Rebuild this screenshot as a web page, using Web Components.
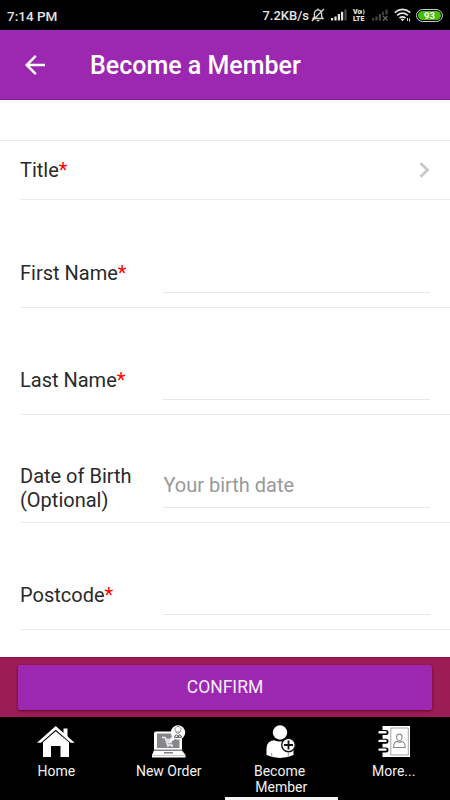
<!DOCTYPE html>
<html lang="en">
<head>
<meta charset="utf-8">
<meta name="viewport" content="width=device-width, initial-scale=1">
<title>Become a Member</title>
<style>
  html, body {
    margin: 0;
    height: 100%;
    overflow: hidden;
    background: #fff;
    font-family: Roboto, "Liberation Sans", sans-serif;
  }
</style>
</head>
<body>
<member-page></member-page>

<script>
class StatusBar extends HTMLElement{
  constructor(){
    super();
    this.attachShadow({mode: 'open'});
  }

  connectedCallback(){
    this.shadowRoot.innerHTML = `
    <style>
    :host {
      display: flex;
      justify-content: space-between;
      align-items: center;
      height: 30px;
      padding: 0 7px;
      background: #000;
      color: #e4e4e4;
      font-size: 13.5px;
      font-weight: 500;
      line-height: 30px;
    }
    .time { padding-top: 1px; }
    .right { display: flex; align-items: center; }
    .speed { font-size: 13px; padding-top: 1px; }
    svg { display: block; }
    .bell { margin-left: 2px; }
    .signal { margin-left: 6px; }
    .volte {
      margin-left: 6px;
      width: 14px;
      font-size: 7px;
      font-weight: 900;
      line-height: 8px;
    }
    .volte div { display: flex; align-items: center; height: 7px; }
    .nosim { margin-left: 5px; }
    .wifi { margin-left: 6px; }
    .battery {
      box-sizing: border-box;
      margin-left: 5px;
      width: 27px;
      height: 13px;
      border: 1px solid #ccc;
      border-radius: 6.5px;
      padding: 1px;
    }
    .level {
      height: 9px;
      border-radius: 4.5px;
      background: #47bd0e;
      color: #fff;
      font-size: 9.5px;
      font-weight: 700;
      line-height: 10px;
      text-align: center;
    }
    </style>
    <span class="time">7:14 PM</span>
    <div class="right">
      <span class="speed">7.2KB/s</span>
      <svg class="bell" width="14" height="14" viewBox="0 0 14 14" fill="none" stroke="#d8d8d8" stroke-width="1.3">
        <path d="M2 10.500h10L10.600 8.600V5.500a3.600 3.600 0 0 0-7.200 0v3.100zM7 2V.5M5.600 12.600h2.800M1 13L13 1"/>
      </svg>
      <svg class="signal" width="16" height="12" viewBox="0 0 16 12" fill="#e4e4e4">
        <path d="M0 9h2.200v2.500H0zM3.400 7.500h2.200v4H3.400zM6.800 5h2.200v6.500H6.800zM10 2.700h2.200v8.800H10z"/>
        <path fill="#4a4a4a" d="M13.400.5h2.200v11h-2.200z"/>
      </svg>
      <div class="volte">
        <div>Vo<svg width="4" height="6" viewBox="0 0 4 6" fill="none" stroke="#e4e4e4"><path d="M.6 1.500v3M2.600.5q1 2.500 0 5"/></svg></div>
        <div>LTE</div>
      </div>
      <svg class="nosim" width="16" height="12" viewBox="0 0 16 12" fill="#444">
        <path d="M0 9h2.200v2.500H0zM3.400 7.500h2.200v4H3.400zM6.800 5h2.200v6.500H6.800zM10 2.700h1.800v3.500H10zM13.400.5h2.200v5h-2.200z"/>
        <path stroke="#666" stroke-width="1.300" d="M11 7l4.500 4.500M15.500 7L11 11.500"/>
      </svg>
      <svg class="wifi" width="17" height="14" viewBox="0 0 17 14" fill="none" stroke="#e4e4e4" stroke-width="1.700">
        <path d="M.7 4.600Q8.500-1.800 16.300 4.600M3.100 7.400q5.400-4.400 10.800 0M5.500 10q3-2.400 6 0"/>
        <path fill="#e4e4e4" stroke="none" d="M6.700 11.200q1.800-1.200 3.600 0L8.500 13.200z"/>
        <path stroke-width="1" d="M13.500 10v3M15.500 10.500v3"/>
      </svg>
      <div class="battery"><div class="level">93</div></div>
    </div>`;
  }
}

class AppHeader extends HTMLElement{
  constructor(){
    super();
    this.attachShadow({mode: 'open'});
  }

  connectedCallback(){
    this.shadowRoot.innerHTML = `
    <style>
    :host {
      display: flex;
      align-items: center;
      box-sizing: border-box;
      height: 70px;
      padding-left: 25px;
      background: #9c27b0;
      border-bottom: 1px solid #8b1a9f;
      color: #fff;
    }
    svg { width: 20px; height: 20px; margin-right: 45px; }
    h1 {
      margin: 0;
      padding-top: 2px;
      font-size: 25px;
      font-weight: 500;
      line-height: 30px;
    }
    </style>
    <svg viewBox="0 0 20 20" fill="none" stroke="#fff" stroke-width="2.500"><path d="M20 10H2M10.800.9L1.700 10l9.100 9.100"/></svg>
    <h1><slot></slot></h1>`;
  }
}

class TitleRow extends HTMLElement{
  constructor(){
    super();
    this.attachShadow({mode: 'open'});
  }

  connectedCallback(){
    this.shadowRoot.innerHTML = `
    <style>
    :host {
      display: block;
      border-top: 1px solid #ebebed;
    }
    .row {
      display: flex;
      align-items: center;
      justify-content: space-between;
      height: 58px;
      margin-left: 20px;
      padding-right: 20px;
      border-bottom: 1px solid #ebebed;
      font-size: 20px;
      line-height: 24px;
    }
    b { color: #f00; font-weight: inherit; }
    svg { width: 11px; height: 16px; }
    </style>
    <div class="row">
      <span><slot></slot><b>*</b></span>
      <svg viewBox="0 0 11 16" fill="none" stroke="#c7c7cc" stroke-width="2.800"><path d="M1.500 1.200L8.600 8l-7.100 6.800"/></svg>
    </div>`;
  }
}

class FormField extends HTMLElement{
  constructor(){
    super();
    this.attachShadow({mode: 'open'});
  }

  connectedCallback(){
    this.shadowRoot.innerHTML = `
    <style>
    :host { display: block; height: 107px; }
    :host([tall]) { height: 108px; }
    .row {
      box-sizing: border-box;
      height: 100%;
      display: flex;
      align-items: flex-end;
      margin-left: 20px;
      padding-right: 20px;
      border-bottom: 1px solid #ebebed;
      font-size: 20px;
    }
    .label {
      display: flex;
      align-items: center;
      width: 143.400px;
      height: 68px;
      line-height: 24px;
    }
    b { color: #f00; font-weight: inherit; }
    .value {
      flex: 1;
      height: 43px;
      margin-bottom: 14px;
      border-bottom: 1px solid #e8e8ea;
      color: #999;
      line-height: 43px;
    }
    </style>
    <div class="row">
      <div class="label"><span><slot></slot>${this.hasAttribute('required') ? '<b>*</b>' : ''}</span></div>
      <div class="value">${this.getAttribute('hint') || ''}</div>
    </div>`;
  }
}

class ConfirmBar extends HTMLElement{
  constructor(){
    super();
    this.attachShadow({mode: 'open'});
  }

  connectedCallback(){
    this.shadowRoot.innerHTML = `
    <style>
    :host {
      display: block;
      box-sizing: border-box;
      height: 60px;
      padding: 7px 18px 0;
      background: #9c1c55;
      border-top: 1px solid #8f0b48;
    }
    button {
      display: block;
      width: 100%;
      height: 45px;
      padding: 0 0 2px;
      border: 0;
      border-radius: 2.500px;
      background: #9c27b0;
      box-shadow: 0 1px 3px rgba(80, 0, 20, 0.8);
      color: #f8eefa;
      font-family: inherit;
      font-size: 17.500px;
      line-height: 42px;
    }
    </style>
    <button><slot></slot></button>`;
  }
}

const tabIcons = {
  home: `
    <path fill="#fff" d="M26.500 3.500h4V14l-4-3.800z"/>
    <path fill="#fff" d="M18.700 1L0 17.800h4L18.700 4.800l15 13h4z"/>
    <path fill="#fff" d="M18.700 6.200L6 17.300V32h8V21h9.500v11H32V17.300z"/>`,
  order: `
    <path fill="#fff" d="M4 6.500h24a2 2 0 0 1 2 2V25H2V8.500a2 2 0 0 1 2-2z"/>
    <path fill="#85878b" d="M5 8.500h22.500V23H5z"/>
    <path fill="#fff" d="M2 25.500h28l3.500 4.500v2.500H0V30z"/>
    <path stroke="#85878b" stroke-width="1" d="M2 25h28"/>
    <path stroke="#777" stroke-width="1.400" d="M12 27.800h9"/>
    <path stroke="#bbb" stroke-width=".8" d="M1 30.500h32"/>
    <path fill="none" stroke="#f2f2f2" stroke-width="1.300" d="M10 12.500h3l2.500 7.500h5"/>
    <path fill="#ddd" d="M13 13.500h8l-1.500 5h-5zM15 20h2v2h-2zM19 20h2v2h-2z"/>
    <path fill="#fff" d="M20 11l-3 6.500 6-3z"/>
    <circle cx="26" cy="7.500" r="7.200" fill="#fff"/>
    <path fill="none" stroke="#888" stroke-width=".9" d="M23.800 7V5.700a1.700 1.700 0 0 1 .3-3.200 2.200 2.200 0 0 1 3.800 0 1.700 1.700 0 0 1 .3 3.200V7zM24.400 7q1.600 4 3.200 0"/>
    <path fill="none" stroke="#555" stroke-width="1" d="M22.500 12.300q0-2.200 2-2.400l1.500 1.200 1.500-1.200q2 .2 2 2.400zM24.800 12.500l2.400-1.200"/>`,
  member: `
    <circle cx="14" cy="7.500" r="7.200" fill="#fff"/>
    <path fill="#fff" d="M.5 30V23Q1 16 8 15.200q6 2.600 12 0Q27.500 16 27.500 24v6Q21 33 14 33T.5 30z"/>
    <path stroke="#999" stroke-width="1" d="M5.500 28l.5 3.500M22.500 28l-.5 3.500"/>
    <circle cx="22.500" cy="20" r="6.800" fill="#fff" stroke="#111" stroke-width="1.400"/>
    <path stroke="#111" stroke-width="1.800" d="M22.500 15.500v9M18 20h9"/>`,
  more: `
    <path fill="#fff" d="M4.500 1h27.500v31H4.500z"/>
    <path fill="none" stroke="#000" stroke-width="5" stroke-linecap="round" d="M2 7.500h6M2 16.200h6M2 24.900h6"/>
    <path fill="none" stroke="#fff" stroke-width="2.400" stroke-linecap="round" d="M1.500 7.200h6M1.500 15.900h6M1.500 24.600h6"/>
    <path fill="none" stroke="#999" stroke-width=".9" d="M12.800 3h17.500v27H12.800z"/>
    <path fill="none" stroke="#888" stroke-width="1.100" d="M21.300 9a2.700 3.200 0 0 1 2.700 3.200c0 1.800-1.300 3.600-2.700 3.600s-2.700-1.800-2.700-3.600A2.700 3.200 0 0 1 21.300 9zM15.500 22.500q0-5.500 3.500-6 2.300 1.500 4.600 0 3.600.5 3.600 6z"/>`
};

class TabItem extends HTMLElement{
  constructor(){
    super();
    this.attachShadow({mode: 'open'});
  }

  connectedCallback(){
    this.shadowRoot.innerHTML = `
    <style>
    :host {
      display: flex;
      flex-direction: column;
      align-items: center;
      box-sizing: border-box;
      padding-top: 8px;
      color: #f2f2f2;
      font-size: 14px;
      line-height: 16px;
      text-align: center;
      border-bottom: 3px solid transparent;
    }
    :host([active]) { border-bottom-color: #f5f5f5; }
    svg { flex: none; display: block; height: 33px; margin-bottom: 5px; }
    </style>
    <svg width="${this.getAttribute('size')}" viewBox="0 0 ${this.getAttribute('size')} 33">${tabIcons[this.getAttribute('icon')]}</svg>
    <span><slot></slot></span>`;
  }
}

class TabBar extends HTMLElement{
  constructor(){
    super();
    this.attachShadow({mode: 'open'});
  }

  connectedCallback(){
    this.shadowRoot.innerHTML = `
    <style>
    :host {
      display: grid;
      grid-template-columns: repeat(4, 1fr);
      height: 83px;
      background: #000;
    }
    </style>
    <slot></slot>`;
  }
}

class MemberPage extends HTMLElement{
  constructor(){
    super();
    this.attachShadow({mode: 'open'});
  }

  connectedCallback(){
    this.shadowRoot.innerHTML = `
    <style>
    :host {
      display: flex;
      flex-direction: column;
      height: 800px;
      color: #2a2a2a;
    }
    main { flex: 1; padding-top: 40px; overflow: hidden; }
    </style>
    <status-bar></status-bar>
    <app-header>Become a Member</app-header>
    <main>
      <title-row>Title</title-row>
      <form-field required tall>First Name</form-field>
      <form-field required>Last Name</form-field>
      <form-field tall hint="Your birth date">Date of Birth<br>(Optional)</form-field>
      <form-field required>Postcode</form-field>
    </main>
    <confirm-bar>CONFIRM</confirm-bar>
    <tab-bar>
      <tab-item icon="home" size="38">Home</tab-item>
      <tab-item icon="order" size="34">New Order</tab-item>
      <tab-item icon="member" size="30" active>Become&nbsp;<br>Member</tab-item>
      <tab-item icon="more" size="32">More...</tab-item>
    </tab-bar>`;
  }
}

customElements.define('status-bar', StatusBar);
customElements.define('app-header', AppHeader);
customElements.define('title-row', TitleRow);
customElements.define('form-field', FormField);
customElements.define('confirm-bar', ConfirmBar);
customElements.define('tab-item', TabItem);
customElements.define('tab-bar', TabBar);
customElements.define('member-page', MemberPage);
</script>
</body>
</html>
